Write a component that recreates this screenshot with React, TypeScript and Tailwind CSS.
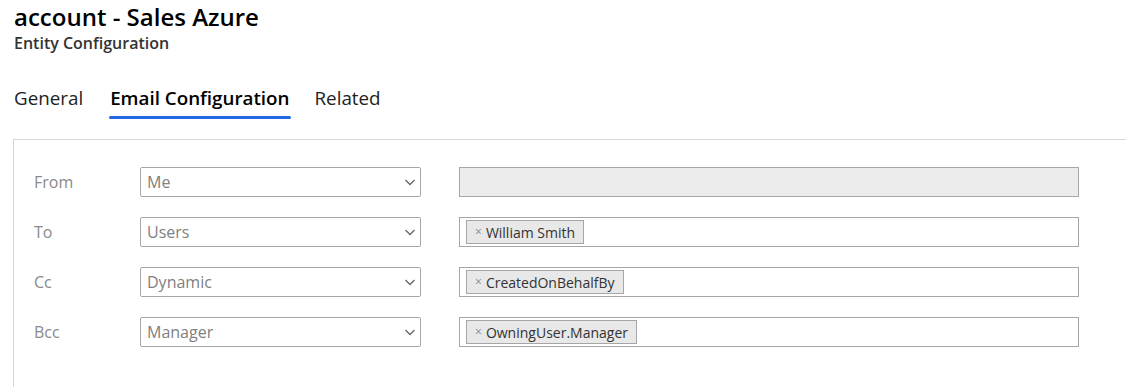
import React from "react";

interface Row {
  label: string;
  choice: string;
  tag?: string;
  disabled?: boolean;
}

const rows: Row[] = [
  { label: "From", choice: "Me", disabled: true },
  { label: "To", choice: "Users", tag: "William Smith" },
  { label: "Cc", choice: "Dynamic", tag: "CreatedOnBehalfBy" },
  { label: "Bcc", choice: "Manager", tag: "OwningUser.Manager" },
];

const Chevron = () => (
  <svg width="14" height="14" viewBox="0 0 14 14" fill="none" className="text-[#666]">
    <path d="M2.5 5l4.5 4.5L11.5 5" stroke="currentColor" strokeWidth="1.3" />
  </svg>
);

const App: React.FC = () => {
  return (
    <div className="w-[1126px] h-[387px] overflow-hidden bg-white flex flex-col font-['Open_Sans',sans-serif]">
      {/* Header */}
      <div className="pl-[14px] pt-[1px]">
        <h1 className="text-[24px] leading-[32px] font-semibold text-black">account - Sales Azure</h1>
        <p className="text-[16px] leading-[22px] font-semibold text-[#333] -mt-[1px]">Entity Configuration</p>
      </div>

      {/* Tabs */}
      <div className="flex pl-[14px] mt-[32px]">
        <div className="text-[18.8px] leading-[24px] text-[#222]">General</div>
        <div className="flex flex-col items-stretch ml-[27px]">
          <div className="text-[18.8px] leading-[24px] font-semibold text-black">Email Configuration</div>
          <div className="h-[3px] rounded-full bg-[#2266e3] mt-[6px] -mx-[1px]" />
        </div>
        <div className="text-[18.8px] leading-[24px] text-[#222] ml-[25px]">Related</div>
      </div>

      {/* Panel */}
      <div className="flex-1 ml-[13px] mt-[20px] border-l border-t border-[#d6d6d6] pt-[27px] flex flex-col gap-[20px]">
        {rows.map((row) => (
          <div key={row.label} className="flex items-center h-[30px]">
            <div className="w-[126px] pl-[20px] text-[16px] text-[#8a8a8a]">{row.label}</div>
            <div className="w-[281px] h-[30px] border border-[#a6a6a6] rounded-[2px] flex items-center justify-between pl-[6px] pr-[3px]">
              <span className="text-[16px] text-[#808080]">{row.choice}</span>
              <Chevron />
            </div>
            <div
              className={
                "ml-[38px] w-[620px] h-[30px] border border-[#a6a6a6] flex items-center pl-[6px] " +
                (row.disabled ? "bg-[#ececec]" : "bg-white")
              }
            >
              {row.tag && (
                <span className="h-[24px] flex items-center gap-[4px] px-[8px] bg-[#e8e8e8] border border-[#a6a6a6] text-[14px] text-[#333]">
                  <span className="text-[#888] text-[12px]">×</span>
                  {row.tag}
                </span>
              )}
            </div>
          </div>
        ))}
      </div>
    </div>
  );
};

export default App;
